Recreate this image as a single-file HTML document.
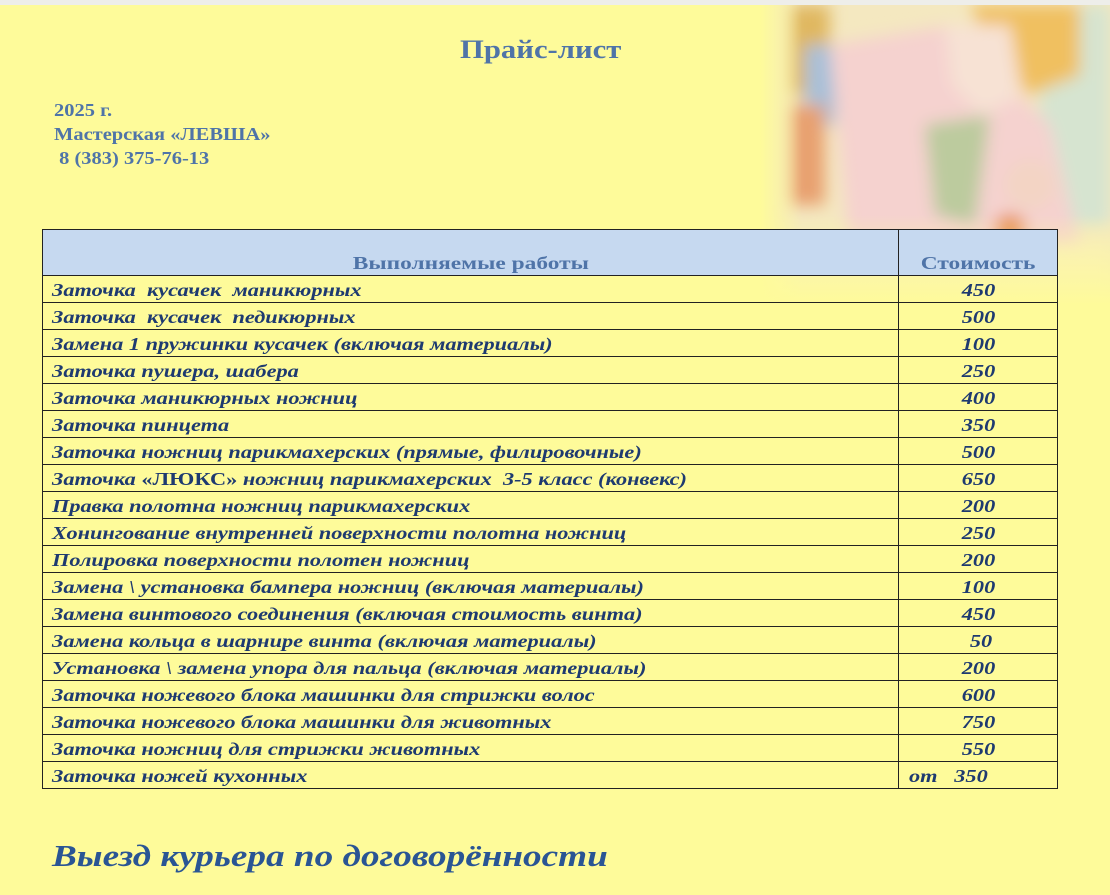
<!DOCTYPE html>
<html><head><meta charset="utf-8"><style>
*{margin:0;padding:0;box-sizing:border-box}
body{width:1110px;height:895px;overflow:hidden;background:#fefb9a;position:relative;font-family:"Liberation Serif",serif}
.top{position:absolute;left:0;top:0;width:1110px;height:5px;background:#eeeeea}
.pic{position:absolute;left:760px;top:5px;width:350px;height:300px;overflow:hidden}
.t{position:absolute;color:#4f74a8;font-weight:bold}
.s{display:inline-block;transform-origin:left center;white-space:nowrap}
table{position:absolute;left:42px;top:229px;width:1016px;border-collapse:collapse}
td{border:1.5px solid #222;height:27px;padding:0 0 0 9px;font-style:italic;font-weight:bold;color:#1e3a70;font-size:18px;line-height:24px;vertical-align:bottom;white-space:nowrap}
td .s{transform:scaleX(1.24)}
td.p{padding:0;text-align:center}
td.p .s{transform-origin:center}
th{border:1.5px solid #222;background:#c6d9f0;height:46px;color:#4f74a8;font-size:18px;vertical-align:bottom;padding-bottom:1px}
th .s{transform-origin:center;transform:scaleX(1.3)}
.bot{position:absolute;left:52px;top:838px;font-size:31px;font-style:italic;font-weight:bold;color:#2a5594;transform:scaleX(1.2);transform-origin:left center}
</style></head><body>
<div class="top"></div>
<div class="pic">
<svg width="350" height="300" viewBox="0 0 350 300">
<defs><filter id="b"><feGaussianBlur stdDeviation="8"/></filter>
<linearGradient id="fade" x1="0" y1="0" x2="0" y2="1"><stop offset="0.7" stop-color="#fefb9a" stop-opacity="0"/><stop offset="1" stop-color="#fefb9a"/></linearGradient>
<linearGradient id="fl" x1="0" y1="0" x2="1" y2="0"><stop offset="0" stop-color="#fefb9a"/><stop offset="0.12" stop-color="#fefb9a" stop-opacity="0"/></linearGradient></defs>
<rect width="350" height="300" fill="#f4e8c0"/>
<g filter="url(#b)">
<rect x="30" y="0" width="40" height="90" fill="#e0b860"/>
<rect x="45" y="40" width="30" height="80" fill="#a8c0d8"/>
<rect x="30" y="100" width="35" height="100" fill="#e8a070"/>
<rect x="280" y="0" width="70" height="220" fill="#d6e4d0"/>
<path d="M70 40 L190 20 L290 120 L320 240 L90 250 Z" fill="#f5d2cf"/>
<path d="M165 120 L230 110 L215 220 L175 210 Z" fill="#bccb9e"/>
<path d="M210 0 L320 0 L320 70 L270 90 L235 60 Z" fill="#f0c060"/>
<path d="M185 20 L250 20 L262 90 L222 110 L192 80 Z" fill="#f7e2d4"/>
<circle cx="270" cy="180" r="25" fill="#f3d4c4"/>
<circle cx="250" cy="225" r="16" fill="#e89050"/>
<rect x="0" y="240" width="350" height="60" fill="#f8ecc0"/>
</g>
<rect width="350" height="300" fill="url(#fade)"/>
<rect width="350" height="300" fill="url(#fl)"/>
</svg></div>
<div class="t" style="left:460px;top:35px;font-size:26px"><span class="s" style="transform:scaleX(1.18)">Прайс-лист</span></div>
<div class="t" style="left:54px;top:98px;font-size:17.5px;line-height:24px"><span class="s" style="transform:scaleX(1.17)">2025 г.</span><br><span class="s" style="transform:scaleX(1.17)">Мастерская «ЛЕВША»</span><br><span class="s" style="transform:scaleX(1.17)">&nbsp;8 (383) 375-76-13</span></div>
<table>
<tr><th style="width:856px"><span class="s">Выполняемые работы</span></th><th><span class="s">Стоимость</span></th></tr>
<tr><td><span class="s">Заточка&nbsp; кусачек&nbsp; маникюрных</span></td><td class="p"><span class="s">450</span></td></tr>
<tr><td><span class="s">Заточка&nbsp; кусачек&nbsp; педикюрных</span></td><td class="p"><span class="s">500</span></td></tr>
<tr><td><span class="s">Замена 1 пружинки кусачек (включая материалы)</span></td><td class="p"><span class="s">100</span></td></tr>
<tr><td><span class="s">Заточка пушера, шабера</span></td><td class="p"><span class="s">250</span></td></tr>
<tr><td><span class="s">Заточка маникюрных ножниц</span></td><td class="p"><span class="s">400</span></td></tr>
<tr><td><span class="s">Заточка пинцета</span></td><td class="p"><span class="s">350</span></td></tr>
<tr><td><span class="s">Заточка ножниц парикмахерских (прямые, филировочные)</span></td><td class="p"><span class="s">500</span></td></tr>
<tr><td><span class="s">Заточка <span style="font-style:normal">«ЛЮКС»</span> ножниц парикмахерских&nbsp; 3-5 класс (конвекс)</span></td><td class="p"><span class="s">650</span></td></tr>
<tr><td><span class="s">Правка полотна ножниц парикмахерских</span></td><td class="p"><span class="s">200</span></td></tr>
<tr><td><span class="s">Хонингование внутренней поверхности полотна ножниц</span></td><td class="p"><span class="s">250</span></td></tr>
<tr><td><span class="s">Полировка поверхности полотен ножниц</span></td><td class="p"><span class="s">200</span></td></tr>
<tr><td><span class="s">Замена \ установка бампера ножниц (включая материалы)</span></td><td class="p"><span class="s">100</span></td></tr>
<tr><td><span class="s">Замена винтового соединения (включая стоимость винта)</span></td><td class="p"><span class="s">450</span></td></tr>
<tr><td><span class="s">Замена кольца в шарнире винта (включая материалы)</span></td><td class="p"><span class="s">&nbsp;50</span></td></tr>
<tr><td><span class="s">Установка \ замена упора для пальца (включая материалы)</span></td><td class="p"><span class="s">200</span></td></tr>
<tr><td><span class="s">Заточка ножевого блока машинки для стрижки волос</span></td><td class="p"><span class="s">600</span></td></tr>
<tr><td><span class="s">Заточка ножевого блока машинки для животных</span></td><td class="p"><span class="s">750</span></td></tr>
<tr><td><span class="s">Заточка ножниц для стрижки животных</span></td><td class="p"><span class="s">550</span></td></tr>
<tr><td><span class="s">Заточка ножей кухонных</span></td><td style="padding-left:10px"><span class="s">от&nbsp;&nbsp; 350</span></td></tr>
</table>
<div class="bot">Выезд курьера по договорённости</div>
</body></html>
